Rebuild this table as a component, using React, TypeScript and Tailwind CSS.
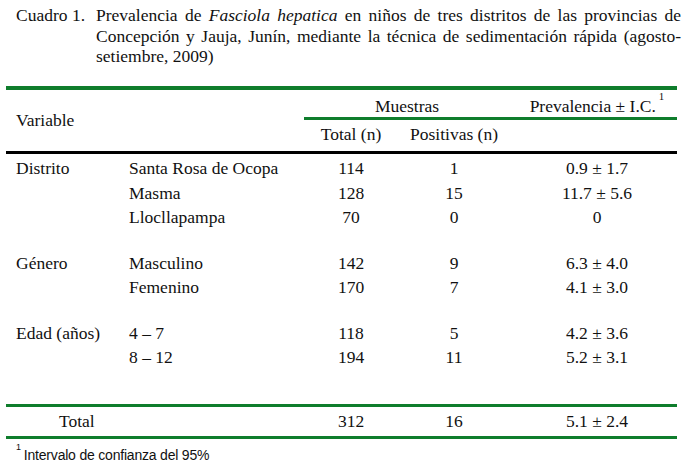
import React from "react";

type Row = { group?: string; label: string; total: string; pos: string; prev: string };

const groups: Row[][] = [
  [
    { group: "Distrito", label: "Santa Rosa de Ocopa", total: "114", pos: "1", prev: "0.9 ± 1.7" },
    { label: "Masma", total: "128", pos: "15", prev: "11.7 ± 5.6" },
    { label: "Llocllapampa", total: "70", pos: "0", prev: "0" },
  ],
  [
    { group: "Género", label: "Masculino", total: "142", pos: "9", prev: "6.3 ± 4.0" },
    { label: "Femenino", total: "170", pos: "7", prev: "4.1 ± 3.0" },
  ],
  [
    { group: "Edad (años)", label: "4 – 7", total: "118", pos: "5", prev: "4.2 ± 3.6" },
    { label: "8 – 12", total: "194", pos: "11", prev: "5.2 ± 3.1" },
  ],
];

const cols = "grid grid-cols-[123px_175px_94px_112px_167px]";

const App = () => {
  return (
    <div className="w-[686px] h-[469px] bg-white text-[#111] [font-family:'Liberation_Serif','Times_New_Roman',serif] text-[17.5px] overflow-hidden">
      {/* Caption */}
      <div className="flex pt-[5px] pl-[16px] pr-[5px] leading-[20.7px]">
        <div className="w-[80px] shrink-0">Cuadro 1.</div>
        <div className="flex-1">
          <div className="text-justify [text-align-last:justify]">
            Prevalencia de <i>Fasciola hepatica</i> en niños de tres distritos de las provincias de
          </div>
          <div className="text-justify [text-align-last:justify]">
            Concepción y Jauja, Junín, mediante la técnica de sedimentación rápida (agosto-
          </div>
          <div>setiembre, 2009)</div>
        </div>
      </div>

      {/* Table */}
      <div className="ml-[6px] w-[671px] mt-[19px]">
        <div className="h-[4px] bg-[#0f7d2c]" />

        {/* Header */}
        <div className={`${cols} border-b-[3px] border-black h-[64px]`}>
          <div className="col-span-2 flex items-center pl-[10px]">Variable</div>
          <div className="col-span-3 flex flex-col">
            <div className="grid grid-cols-[206px_167px] h-[30px] border-b-[3px] border-[#0f7d2c] leading-[21px] pt-[6px]">
              <div className="text-center">Muestras</div>
              <div className="text-center pl-[7px]">
                Prevalencia ± I.C.<sup className="text-[11px] align-[7px] ml-[3px]">1</sup>
              </div>
            </div>
            <div className="grid grid-cols-[94px_112px] leading-[21px] pt-[4px]">
              <div className="text-center">Total (n)</div>
              <div className="text-center">Positivas (n)</div>
            </div>
          </div>
        </div>

        {/* Body */}
        <div className="flex flex-col gap-[21px] pt-[2px] pb-[34px]">
          {groups.map((g, gi) => (
            <div key={gi}>
              {g.map((r, ri) => (
                <div key={ri} className={`${cols} leading-[24.5px]`}>
                  <div className="pl-[10px]">{r.group ?? ""}</div>
                  <div>{r.label}</div>
                  <div className="text-center">{r.total}</div>
                  <div className="text-center">{r.pos}</div>
                  <div className="text-center pl-[7px]">{r.prev}</div>
                </div>
              ))}
            </div>
          ))}
        </div>

        {/* Total */}
        <div className={`${cols} border-y-[3px] border-[#0f7d2c] h-[35px] leading-[28px]`}>
          <div className="col-span-2 pl-[53px]">Total</div>
          <div className="text-center">312</div>
          <div className="text-center">16</div>
          <div className="text-center pl-[7px]">5.1 ± 2.4</div>
        </div>
      </div>

      {/* Footnote */}
      <div className="mt-[8px] pl-[16px] [font-family:'Liberation_Sans',Arial,sans-serif] text-[14px] leading-[16px] tracking-[-0.2px]">
        <sup className="text-[9px] align-[5px] mr-[3px]">1</sup>Intervalo de confianza del 95%
      </div>
    </div>
  );
};

export default App;
